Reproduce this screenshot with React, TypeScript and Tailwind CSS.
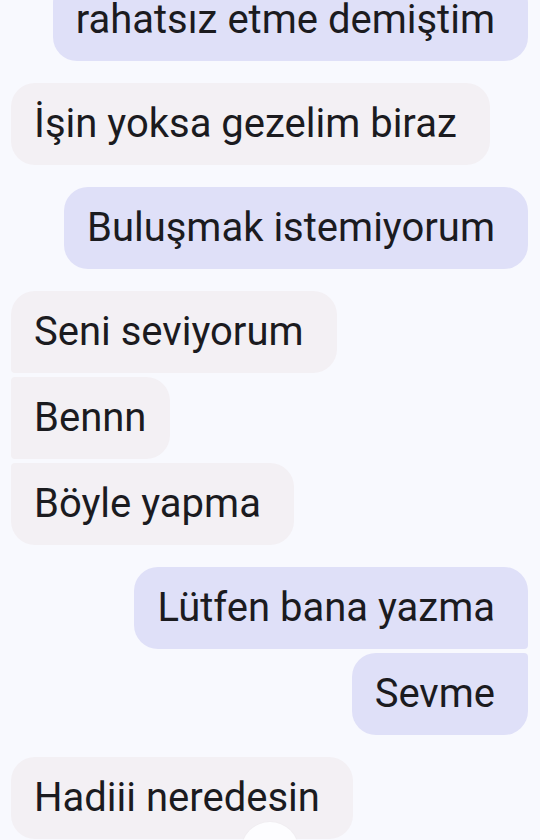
type Side = "in" | "out";
type Pos = "single" | "first" | "middle" | "last";

interface Msg {
  text: string;
  side: Side;
  pos: Pos;
  tight?: boolean;
}

const messages: Msg[] = [
  { text: "rahatsız etme demiştim", side: "out", pos: "single" },
  { text: "İşin yoksa gezelim biraz", side: "in", pos: "single" },
  { text: "Buluşmak istemiyorum", side: "out", pos: "single" },
  { text: "Seni seviyorum", side: "in", pos: "first" },
  { text: "Bennn", side: "in", pos: "middle", tight: true },
  { text: "Böyle yapma", side: "in", pos: "last" },
  { text: "Lütfen bana yazma", side: "out", pos: "first" },
  { text: "Sevme", side: "out", pos: "last" },
  { text: "Hadiii neredesin", side: "in", pos: "single" },
];

const corners: Record<Side, Record<Pos, string>> = {
  in: {
    single: "rounded-[24px]",
    first: "rounded-[24px] rounded-bl-[4px]",
    middle: "rounded-[24px] rounded-l-[4px]",
    last: "rounded-[24px] rounded-tl-[4px]",
  },
  out: {
    single: "rounded-[24px]",
    first: "rounded-[24px] rounded-br-[4px]",
    middle: "rounded-[24px] rounded-r-[4px]",
    last: "rounded-[24px] rounded-tr-[4px]",
  },
};

function Bubble({ msg, index }: { msg: Msg; index: number }) {
  const grouped = msg.pos === "middle" || msg.pos === "last";
  const spacing = index === 0 ? "-mt-[21px]" : grouped ? "mt-1" : "mt-[22px]";
  return (
    <div
      className={`flex ${msg.side === "out" ? "justify-end" : "justify-start"} ${spacing}`}
    >
      <div
        className={`h-[82px] flex items-center pl-[23px] ${
          msg.tight ? "pr-[24px]" : "pr-[33px]"
        } ${corners[msg.side][msg.pos]} ${
          msg.side === "out" ? "bg-[#dfe0f8]" : "bg-[#f3f0f4]"
        }`}
      >
        <span className="text-[40px] leading-[46px] text-[#1b1b1f] whitespace-nowrap">
          {msg.text}
        </span>
      </div>
    </div>
  );
}

export default function App() {
  return (
    <div
      className="relative h-[840px] w-[540px] overflow-hidden bg-[#f8f9fe]"
      style={{ fontFamily: "Roboto, 'Noto Sans', sans-serif" }}
    >
      <div className="flex flex-col pl-[11px] pr-[12px]">
        {messages.map((m, i) => (
          <Bubble key={i} msg={m} index={i} />
        ))}
      </div>

      {/* scroll-down button peeking at the bottom */}
      <div className="absolute left-1/2 top-[822px] -translate-x-1/2 w-[57px] h-[57px] rounded-full bg-[#fdfdff] shadow-[0_0_2px_rgba(0,0,0,0.04)]" />
    </div>
  );
}
